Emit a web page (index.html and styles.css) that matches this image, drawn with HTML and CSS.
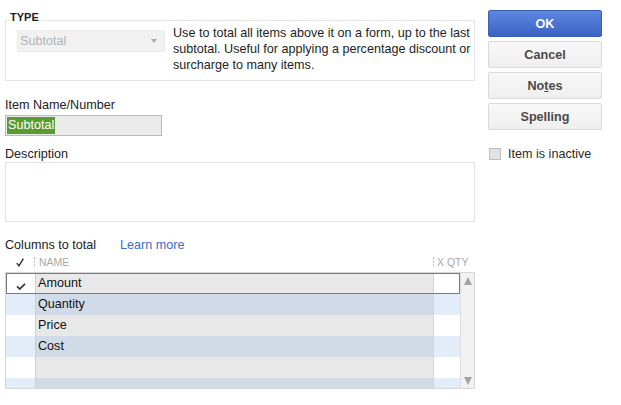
FILE: index.html
```html
<!DOCTYPE html>
<html>
<head>
  <title>Edit Item - Subtotal</title>
  <link rel="stylesheet" href="styles.css">
</head>
<body>
  <div class="dialog">
    <div class="main">
      <fieldset class="type-box">
        <legend>TYPE</legend>
        <div class="type-row">
          <div class="type-select">
            <span>Subtotal</span>
            <span class="arrow"></span>
          </div>
          <p class="type-desc">Use to total all items above it on a form, up to the last subtotal. Useful for applying a percentage discount or surcharge to many items.</p>
        </div>
      </fieldset>

      <div class="field-label first">Item Name/Number</div>
      <div class="name-input"><span class="picked">Subtotal</span></div>

      <div class="field-label">Description</div>
      <div class="desc-box"></div>

      <div class="cols-title">
        <span>Columns to total</span>
        <a href="#" class="learn">Learn more</a>
      </div>

      <div class="cols-head">
        <span class="head-chk">
          <svg width="8" height="9" viewBox="0 0 8 9"><path d="M0.8 5.2 L2.9 7.8 L7.4 0.6" stroke="#222" stroke-width="1.3" fill="none"/></svg>
        </span>
        <span class="head-name">NAME</span>
        <span class="head-qty">X QTY</span>
      </div>

      <div class="grid">
        <div class="rows">
          <div class="row sel">
            <div class="chk">
              <svg width="10" height="7" viewBox="0 0 10 7"><path d="M1 3.4 L3.8 6 L9 0.8" stroke="#333" stroke-width="1.7" fill="none"/></svg>
            </div>
            <div class="nm">Amount</div>
            <div class="qty"></div>
          </div>
          <div class="row alt">
            <div class="chk"></div>
            <div class="nm">Quantity</div>
            <div class="qty"></div>
          </div>
          <div class="row">
            <div class="chk"></div>
            <div class="nm">Price</div>
            <div class="qty"></div>
          </div>
          <div class="row alt">
            <div class="chk"></div>
            <div class="nm">Cost</div>
            <div class="qty"></div>
          </div>
          <div class="row">
            <div class="chk"></div>
            <div class="nm"></div>
            <div class="qty"></div>
          </div>
          <div class="row alt">
            <div class="chk"></div>
            <div class="nm"></div>
            <div class="qty"></div>
          </div>
        </div>
        <div class="scroll">
          <span class="tri up"></span>
          <span class="tri down"></span>
        </div>
      </div>
    </div>

    <div class="side">
      <button class="btn ok">OK</button>
      <button class="btn">Cancel</button>
      <button class="btn">No<u>t</u>es</button>
      <button class="btn">Spelling</button>
      <label class="inactive">
        <span class="box"></span>
        Item is inactive
      </label>
    </div>
  </div>
</body>
</html>
```

FILE: styles.css
```css
* {
  box-sizing: border-box;
}

body {
  margin: 0;
  font-family: "Liberation Sans", Arial, sans-serif;
  font-size: 12.6px;
  color: #222;
  background: #fff;
}

.dialog {
  display: flex;
  width: 621px;
  height: 405px;
}

.main {
  width: 470px;
  margin-left: 5px;
}

/* type box */
.type-box {
  margin: 11px 0 0;
  padding: 0 1px 7px 11px;
  border: 1px solid #e4e4e4;
  min-width: 0;
}

.type-box legend {
  font-size: 11px;
  font-weight: bold;
  line-height: 12px;
  padding: 0 2px 7px 1px;
  margin-left: -8px;
  color: #222;
}

.type-row {
  display: flex;
  margin-top: -5px;
}

.type-select {
  flex: none;
  width: 148px;
  height: 22px;
  margin-top: 5px;
  padding: 0 7px 0 2px;
  display: flex;
  align-items: center;
  justify-content: space-between;
  background: #f1f1f1;
  border: 1px solid #ececec;
  color: #b3b3b3;
}

.arrow {
  width: 0;
  height: 0;
  border-left: 3.5px solid transparent;
  border-right: 3.5px solid transparent;
  border-top: 4px solid #a8a8a8;
}

.type-desc {
  margin: 0 0 0 8px;
  width: 300px;
  line-height: 16px;
  color: #1e1e1e;
}

/* fields */
.field-label {
  line-height: 15px;
  margin-top: 11px;
}

.field-label.first {
  margin-top: 17px;
}

.name-input {
  margin-top: 2px;
  width: 157px;
  height: 21px;
  padding: 1px;
  border: 1px solid #a9bdd6;
  background: #ebebeb;
}

.picked {
  display: inline-block;
  height: 17px;
  line-height: 17px;
  padding: 0 1px;
  background: #5b9c32;
  color: #fff;
}

.desc-box {
  width: 470px;
  height: 60px;
  border: 1px solid #e4e4e4;
}

.cols-title {
  display: flex;
  gap: 24px;
  margin-top: 16px;
  line-height: 15px;
}

.learn {
  color: #3d6cc9;
  text-decoration: none;
}

/* columns grid */
.cols-head {
  display: flex;
  align-items: center;
  height: 16px;
  margin-top: 1px;
  font-size: 10.5px;
  color: #a8a8a8;
}

.head-chk {
  width: 29px;
  display: flex;
  justify-content: center;
  padding-left: 1px;
}

.head-name {
  width: 399px;
  border-left: 1px dotted #b5b5b5;
  padding-left: 4px;
  line-height: 10px;
}

.head-qty {
  border-left: 1px dotted #b5b5b5;
  padding-left: 3px;
  line-height: 10px;
}

.grid {
  display: flex;
  margin-top: 2px;
  height: 117px;
  border: 1px solid #d6d6d6;
}

.rows {
  flex: 1;
  overflow: hidden;
}

.row {
  display: flex;
  height: 21px;
}

.row .chk {
  width: 30px;
  display: flex;
  justify-content: center;
  align-items: flex-end;
  padding-bottom: 4px;
  border-right: 1px solid #cfcfcf;
  background: #fff;
}

.row .nm {
  flex: 1;
  padding-left: 2px;
  line-height: 20px;
  color: #111;
  background: #e8e8e8;
}

.row .qty {
  width: 27px;
  border-left: 1px solid #d6d6d6;
  background: #fff;
}

.row.alt .chk,
.row.alt .qty {
  background: #e3edf9;
}

.row.alt .nm {
  background: #d1dbe7;
}

.row.sel {
  outline: 1px solid #7b7b7b;
  outline-offset: -1px;
}

.scroll {
  width: 14px;
  display: flex;
  flex-direction: column;
  justify-content: space-between;
  align-items: center;
  padding: 4px 0 3px;
  border-left: 1px solid #dedede;
  background: #f1f1f1;
}

.tri {
  width: 0;
  height: 0;
  border-left: 4px solid transparent;
  border-right: 4px solid transparent;
}

.tri.up {
  border-bottom: 8px solid #a3a3a3;
}

.tri.down {
  border-top: 8px solid #a3a3a3;
}

/* side buttons */
.side {
  width: 114px;
  margin-left: 13px;
  padding-top: 10px;
  display: flex;
  flex-direction: column;
}

.btn {
  height: 27px;
  margin: 0 0 4px;
  font-family: "Liberation Sans", Arial, sans-serif;
  font-size: 12.6px;
  font-weight: bold;
  color: #4a4a4a;
  background: linear-gradient(#f8f8f8, #efefef);
  border: 1px solid #d9d9d9;
  border-radius: 2px;
}

.btn.ok {
  color: #fff;
  background: linear-gradient(#5d87df, #3c62c3);
  border-color: #3a5eb6;
}

.inactive {
  display: flex;
  align-items: center;
  gap: 7px;
  margin-top: 13px;
  margin-left: 1px;
  color: #2a2a2a;
}

.inactive .box {
  width: 12px;
  height: 12px;
  border: 1px solid #bdbdbd;
  background: #e2e2e2;
}
```
